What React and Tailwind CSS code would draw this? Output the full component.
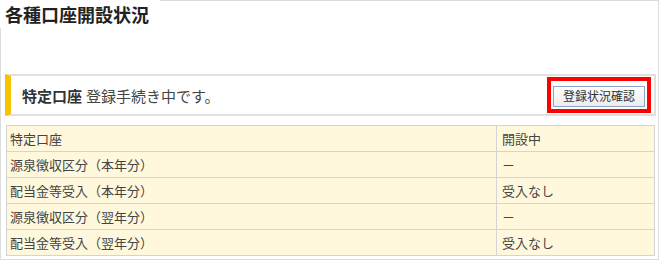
export default function App() {
  const rows = [
    ["特定口座", "開設中"],
    ["源泉徴収区分（本年分）", "－"],
    ["配当金等受入（本年分）", "受入なし"],
    ["源泉徴収区分（翌年分）", "－"],
    ["配当金等受入（翌年分）", "受入なし"],
  ];
  return (
    <div
      className="w-[660px] h-[261px] bg-white text-[#333]"
      style={{ fontFamily: '"Noto Sans CJK JP", "Noto Sans", sans-serif' }}
    >
      <div className="w-[659px] h-[260px] flex flex-col border-r border-b border-[#dcdcdc]">
        <div className="flex h-[28px] shrink-0">
          <div className="w-[160px] pl-[5px] pt-[1px] text-[18px] leading-[26px] font-bold text-[#222]">
            各種口座開設状況
          </div>
          <div className="flex-1 border-t border-[#dcdcdc]" />
        </div>
        <div className="flex-1 border-l border-[#dcdcdc] pl-[4px] pr-[2px] pt-[46px]">
          <div className="h-[42px] flex items-center justify-between border-2 border-[#e0e0e0] border-l-[6px] border-l-[#f7c300] pl-[11px] pr-[3px]">
            <div className="text-[15px] leading-none">
              <span className="font-bold">特定口座</span>
              <span className="ml-[4px] text-[#444]">登録手続き中です。</span>
            </div>
            <div className="border-[4px] border-[#ff0000] px-[2px] pt-[1px] pb-[2px]">
              <button className="w-[92px] h-[21px] border border-[#8ea6c9] bg-gradient-to-b from-white to-[#ececec] text-[12px] leading-none text-[#333]">
                登録状況確認
              </button>
            </div>
          </div>
          <table className="mt-[9px] ml-[1px] w-[649px] border-collapse bg-[#fff8dc] text-[13px] text-[#444]">
            <tbody>
              {rows.map((r, i) => (
                <tr key={i} className="h-[26px]">
                  <td className="w-[490px] border border-[#d4d4d4] pl-[3px] py-0 leading-none">{r[0]}</td>
                  <td className="border border-[#d4d4d4] pl-[5px] py-0 leading-none">{r[1]}</td>
                </tr>
              ))}
            </tbody>
          </table>
        </div>
      </div>
    </div>
  );
}
